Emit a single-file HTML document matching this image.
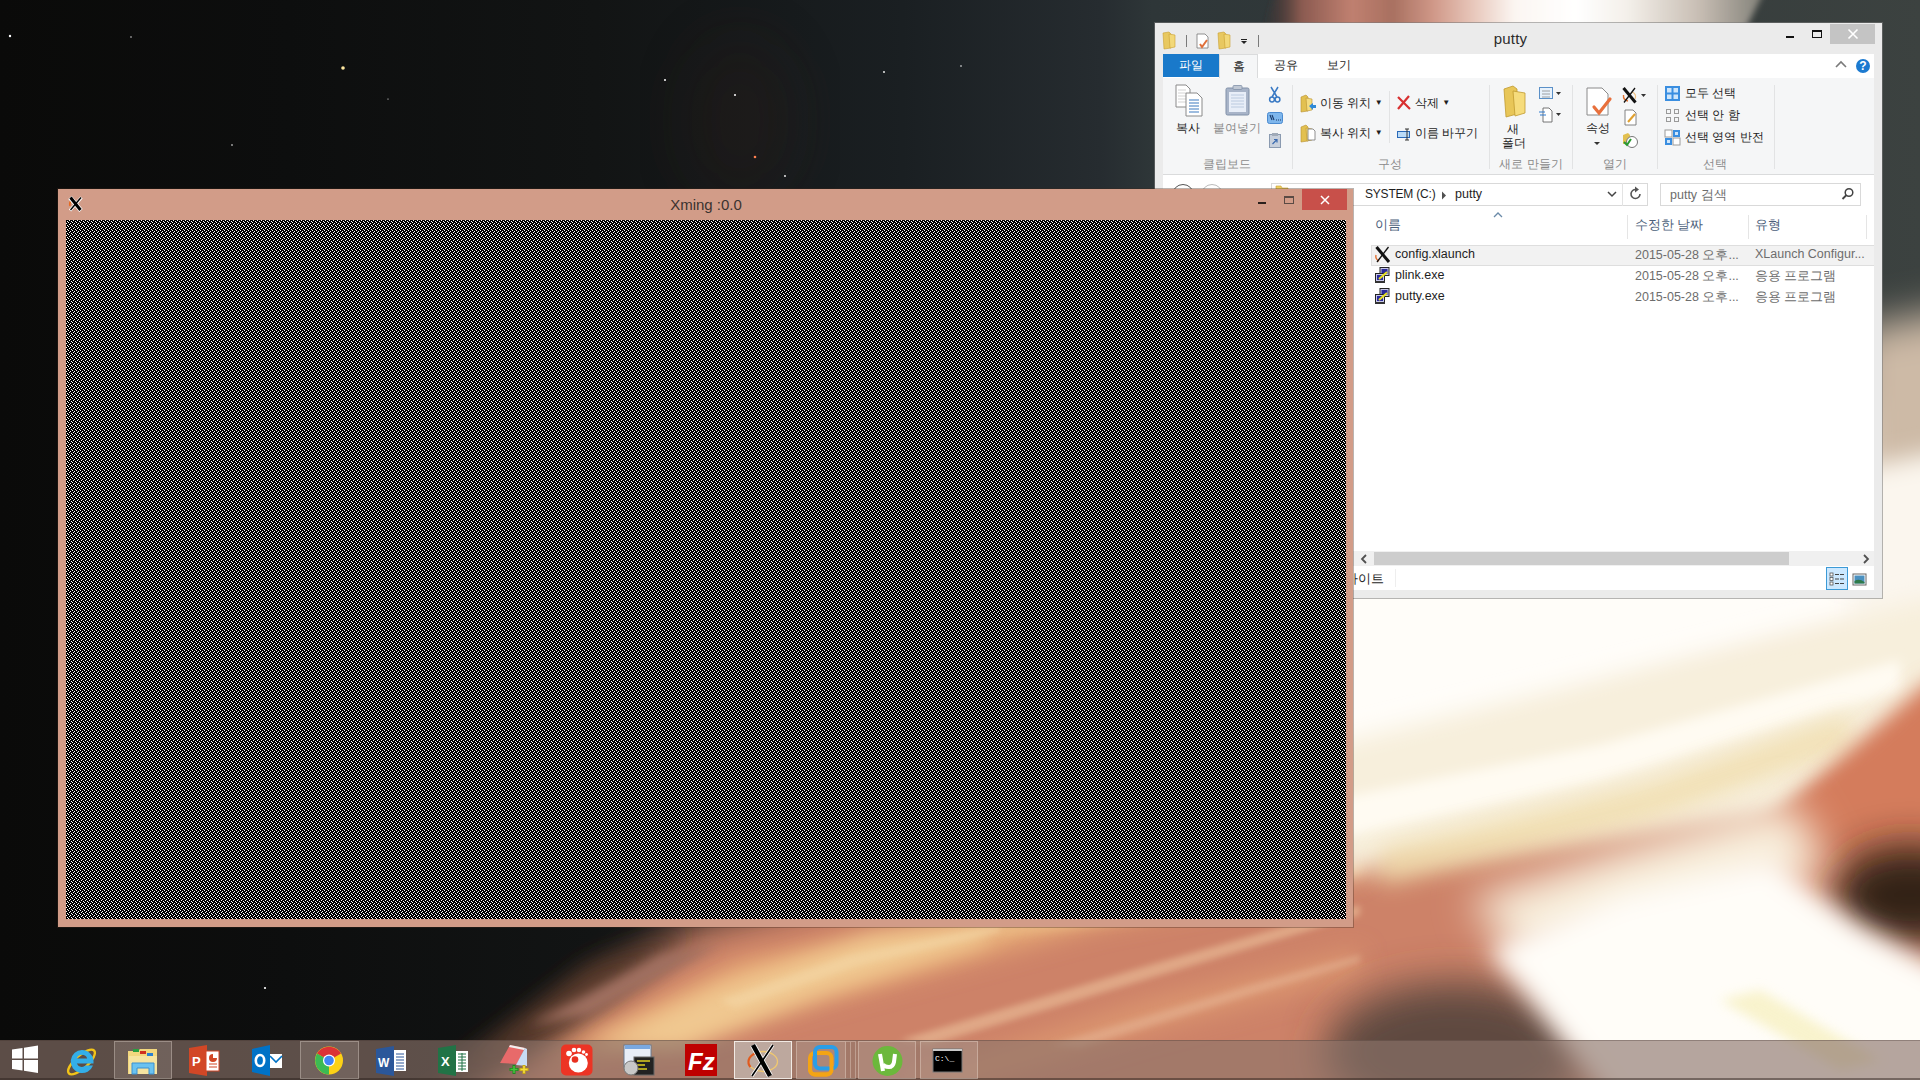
<!DOCTYPE html>
<html><head><meta charset="utf-8">
<style>
*{margin:0;padding:0;box-sizing:border-box}
html,body{width:1920px;height:1080px;overflow:hidden;background:#0b0b0c;font-family:"Liberation Sans",sans-serif}
.abs{position:absolute}
#wall{position:absolute;left:0;top:0;width:1920px;height:1080px}
</style></head><body>
<svg id="wall" width="1920" height="1080" viewBox="0 0 1920 1080">
<defs>
 <filter id="b60" x="-50%" y="-50%" width="200%" height="200%"><feGaussianBlur stdDeviation="60"/></filter>
 <filter id="b30" x="-50%" y="-50%" width="200%" height="200%"><feGaussianBlur stdDeviation="30"/></filter>
 <filter id="b20" x="-50%" y="-50%" width="200%" height="200%"><feGaussianBlur stdDeviation="20"/></filter>
 <filter id="b12" x="-50%" y="-50%" width="200%" height="200%"><feGaussianBlur stdDeviation="12"/></filter>
 <filter id="b10" x="-50%" y="-50%" width="200%" height="200%"><feGaussianBlur stdDeviation="10"/></filter>
 <filter id="b6" x="-50%" y="-50%" width="200%" height="200%"><feGaussianBlur stdDeviation="6"/></filter>
 <filter id="b3" x="-50%" y="-50%" width="200%" height="200%"><feGaussianBlur stdDeviation="3"/></filter>
 <linearGradient id="sky" x1="0" y1="0" x2="1" y2="0">
  <stop offset="0" stop-color="#0a0a09"/><stop offset="0.15" stop-color="#0d0e0e"/><stop offset="0.31" stop-color="#121414"/><stop offset="0.47" stop-color="#1a1f22"/><stop offset="0.573" stop-color="#262c30"/><stop offset="0.6" stop-color="#2e3638"/><stop offset="0.85" stop-color="#353c3c"/><stop offset="1" stop-color="#3c4240"/>
 </linearGradient>
 <linearGradient id="beam" x1="0" y1="0" x2="1" y2="0">
  <stop offset="0" stop-color="#3a2a28" stop-opacity="0"/><stop offset="0.08" stop-color="#8a5a50"/><stop offset="0.18" stop-color="#c08070"/><stop offset="0.26" stop-color="#a87060"/><stop offset="0.34" stop-color="#d09888"/><stop offset="0.42" stop-color="#e8c8bc"/><stop offset="0.5" stop-color="#fcf6f2"/><stop offset="0.62" stop-color="#ffffff"/><stop offset="0.72" stop-color="#f4f0ea"/><stop offset="0.86" stop-color="#c8beb4"/><stop offset="1" stop-color="#7a7a72"/>
 </linearGradient>
</defs>
<rect width="1920" height="1080" fill="url(#sky)"/>
<ellipse cx="740" cy="120" rx="50" ry="80" fill="#2e1c16" opacity="0.3" filter="url(#b30)"/>
<!-- top beam -->
<polygon points="1280,-20 1770,-20 1740,40 1260,40" fill="url(#beam)" filter="url(#b3)"/>
<!-- orange region (whole lower-right) -->
<polygon points="410,1140 690,925 1000,850 1353,760 2000,500 2000,1140" fill="#cd8268" filter="url(#b20)"/>
<polygon points="440,1080 590,965 690,930 560,1030" fill="#5a3a2c" filter="url(#b12)"/>
<polygon points="530,1025 660,955 720,945 590,1015" fill="#a07060" filter="url(#b6)"/>
<!-- light streaks under xming -->
<polygon points="540,1060 740,960 1100,895 1360,850 1360,875 1100,925 680,1040" fill="#e6a874" filter="url(#b12)"/>
<polygon points="590,1045 720,985 870,935 1010,920 980,945 820,995 680,1050" fill="#f0c890" filter="url(#b10)"/>
<polygon points="1000,925 1150,905 1360,860 1360,872 1150,918 1000,935" fill="#f0c890" opacity="0.7" filter="url(#b6)"/>
<polygon points="900,1080 1150,1000 1360,950 1360,975 1150,1030 950,1090" fill="#dc9670" filter="url(#b12)"/>
<g filter="url(#b3)" opacity="0.55">
 <polygon points="900,1040 1150,965 1360,905 1360,915 1150,978 930,1045" fill="#f0c8a0"/>
 <polygon points="1050,1045 1250,985 1360,955 1360,962 1250,995 1080,1048" fill="#e8b898"/>
 <polygon points="720,1000 850,955 1000,925 1000,932 860,965 735,1008" fill="#f4d8a8"/>
</g>
<!-- glow (white) top of right region -->
<polygon points="1280,540 2000,380 2000,620 1760,680 1353,800 1280,820" fill="#fffdf9" filter="url(#b20)"/>
<!-- right strip beige -->
<polygon points="1850,330 2000,300 2000,560 1850,560" fill="#cdbaa6" filter="url(#b20)"/>
<polygon points="1850,470 2000,440 2000,700 1850,700" fill="#fbf6ee" filter="url(#b12)"/>
<!-- cream textured band -->
<polygon points="1330,745 1920,600 2000,590 2000,690 1780,815 1500,850 1330,875" fill="#f7efdc" filter="url(#b12)"/>
<polygon points="1330,800 1600,745 1900,660 1900,690 1600,780 1330,840" fill="#fffbf2" filter="url(#b6)"/>
<polygon points="1380,850 1650,785 1850,715 1850,745 1650,820 1380,885" fill="#f0dca8" opacity="0.8" filter="url(#b12)"/>
<!-- salmon right -->
<polygon points="1740,845 1930,680 2000,670 2000,900 1740,900" fill="#d47c5c" filter="url(#b10)"/>
<!-- dark patch right -->
<ellipse cx="1910" cy="895" rx="78" ry="50" fill="#302218" filter="url(#b20)"/>
<!-- dark patch bottom -->
<ellipse cx="1455" cy="1052" rx="130" ry="70" fill="#5e4a40" filter="url(#b20)"/>
<polygon points="1470,900 1620,850 1790,800 1830,870 1700,920 1520,960" fill="#f8eedc" filter="url(#b20)"/>
<!-- white burst -->
<polygon points="1490,950 1620,895 1770,860 1860,925 2000,1000 2000,1140 1640,1140" fill="#fffdf8" filter="url(#b12)"/>
<polygon points="1720,1000 1760,990 1880,1060 1840,1070" fill="#f4ecb0" opacity="0.6" filter="url(#b6)"/>
<!-- stars -->
<g fill="#fff">
 <circle cx="10" cy="36" r="1.2"/><circle cx="343" cy="68" r="1.8" fill="#ffe8a0"/><circle cx="665" cy="80" r="1"/><circle cx="735" cy="95" r="1"/><circle cx="755" cy="157" r="1.3" fill="#ff8050"/><circle cx="785" cy="176" r="0.9"/><circle cx="884" cy="72" r="0.9"/><circle cx="265" cy="988" r="1.1"/><circle cx="232" cy="145" r="0.8"/><circle cx="131" cy="37" r="0.7"/><circle cx="961" cy="66" r="0.8"/><circle cx="1183" cy="165" r="0.6"/><circle cx="388" cy="99" r="0.6"/><circle cx="170" cy="855" r="0.6"/>
</g>
</svg>

<!-- Explorer window -->
<div class="abs" id="exp" style="left:1155px;top:23px;width:727px;height:575px;background:#ebebeb;box-shadow:0 0 0 1px rgba(120,120,120,0.55)">
</div>
<div class="abs" style="left:1155px;top:23px;width:727px;height:575px;font-size:12px;color:#1e1e1e">
 <!-- title -->
 <div class="abs" style="left:-8px;top:7px;width:727px;text-align:center;font-size:15px;color:#2b2b2b;letter-spacing:0.2px">putty</div>
 <!-- quick access -->
 <svg class="abs" style="left:6px;top:6px" width="100" height="22">
  <path d="M2 4 L8 3 L10 5 L10 19 L3 20 Z" fill="#e8c860" stroke="#c9a030" stroke-width="0.6"/>
  <path d="M8 5 L14 6 L14 18 L9 19 Z" fill="#f2d878" stroke="#c9a030" stroke-width="0.6"/>
  <rect x="25" y="6" width="1" height="12" fill="#7a7a7a"/>
  <path d="M36 5 H44 L47 8 V19 H36 Z" fill="#fff" stroke="#777" stroke-width="0.8"/>
  <path d="M39 15 L41 18 L46 11" fill="none" stroke="#e0703a" stroke-width="2"/>
  <path d="M57 4 L63 3 L65 5 L65 19 L58 20 Z" fill="#e8c860" stroke="#c9a030" stroke-width="0.6"/>
  <path d="M63 5 L69 6 L69 18 L64 19 Z" fill="#f2d878" stroke="#c9a030" stroke-width="0.6"/>
  <rect x="80" y="10" width="6" height="1" fill="#222"/>
  <path d="M80 12 H86 L83 15 Z" fill="#222"/>
  <rect x="97" y="6" width="1" height="12" fill="#7a7a7a"/>
 </svg>
 <!-- window buttons -->
 <div class="abs" style="left:631px;top:13px;width:8px;height:2px;background:#111"></div>
 <div class="abs" style="left:657px;top:7px;width:10px;height:8px;border:1px solid #111;border-top-width:2px"></div>
 <div class="abs" style="left:675px;top:1px;width:45px;height:20px;background:#c4c4c4"></div>
 <svg class="abs" style="left:692px;top:5px" width="12" height="12"><path d="M1.5 1.5 L10.5 10.5 M10.5 1.5 L1.5 10.5" stroke="#fff" stroke-width="1.6"/></svg>
 <!-- tab row -->
 <div class="abs" style="left:8px;top:31px;width:711px;height:25px;background:#fff;border-bottom:1px solid #dadbdc"></div>
 <div class="abs" style="left:8px;top:31px;width:56px;height:23px;background:#1979ca;color:#fff;text-align:center;line-height:23px;font-size:12px">파일</div>
 <div class="abs" style="left:64px;top:31px;width:39px;height:25px;background:#f5f6f7;border:1px solid #dadbdc;border-bottom:none;text-align:center;line-height:23px">홈</div>
 <div class="abs" style="left:119px;top:31px;line-height:23px">공유</div>
 <div class="abs" style="left:172px;top:31px;line-height:23px">보기</div>
 <svg class="abs" style="left:680px;top:37px" width="12" height="10"><path d="M1 7 L6 2 L11 7" fill="none" stroke="#7a7a7a" stroke-width="1.6"/></svg>
 <div class="abs" style="left:701px;top:36px;width:14px;height:14px;border-radius:50%;background:#1c7ad0;color:#fff;font-size:12px;font-weight:bold;text-align:center;line-height:14px">?</div>
 <!-- ribbon body -->
 <div class="abs" style="left:8px;top:55px;width:711px;height:97px;background:#f5f6f7;border-bottom:1px solid #dadbdc"></div>
 <div class="abs" style="left:137px;top:62px;width:1px;height:84px;background:#e2e3e4"></div>
 <div class="abs" style="left:334px;top:62px;width:1px;height:84px;background:#e2e3e4"></div>
 <div class="abs" style="left:417px;top:62px;width:1px;height:84px;background:#e2e3e4"></div>
 <div class="abs" style="left:502px;top:62px;width:1px;height:84px;background:#e2e3e4"></div>
 <div class="abs" style="left:619px;top:62px;width:1px;height:84px;background:#e2e3e4"></div>
 <!-- group labels -->
 <div class="abs" style="left:40px;top:133px;width:64px;text-align:center;color:#8a8a8a">클립보드</div>
 <div class="abs" style="left:205px;top:133px;width:60px;text-align:center;color:#8a8a8a">구성</div>
 <div class="abs" style="left:335px;top:133px;width:82px;text-align:center;color:#8a8a8a">새로 만들기</div>
 <div class="abs" style="left:418px;top:133px;width:84px;text-align:center;color:#8a8a8a">열기</div>
 <div class="abs" style="left:520px;top:133px;width:80px;text-align:center;color:#8a8a8a">선택</div>
 <!-- ribbon items text -->
 <div class="abs" style="left:21px;top:97px">복사</div>
 <div class="abs" style="left:58px;top:97px;color:#8a8a8a">붙여넣기</div>
 <div class="abs" style="left:165px;top:72px">이동 위치 <span style="font-size:8px;vertical-align:2px">▼</span></div>
 <div class="abs" style="left:165px;top:102px">복사 위치 <span style="font-size:8px;vertical-align:2px">▼</span></div>
 <div class="abs" style="left:260px;top:72px">삭제 <span style="font-size:8px;vertical-align:2px">▼</span></div>
 <div class="abs" style="left:260px;top:102px">이름 바꾸기</div>
 <div class="abs" style="left:352px;top:98px">새</div>
 <div class="abs" style="left:347px;top:112px">폴더</div>
 <div class="abs" style="left:431px;top:97px">속성</div>
 <div class="abs" style="left:530px;top:62px">모두 선택</div>
 <div class="abs" style="left:530px;top:84px">선택 안 함</div>
 <div class="abs" style="left:530px;top:106px">선택 영역 반전</div>
 <!-- ribbon icons -->
 <svg class="abs" style="left:0;top:0;overflow:visible" width="727" height="320">
  <!-- copy -->
  <g transform="translate(20,62)">
   <path d="M1 0 H11 L15 4 V22 H1 Z" fill="#fff" stroke="#8a8a8a" stroke-width="1"/>
   <path d="M3 5H11M3 8H11M3 11H11M3 14H11M3 17H11" stroke="#c8c8c8" stroke-width="0.8"/>
   <path d="M11 8 H22 L27 13 V31 H11 Z" fill="#fff" stroke="#8a8a8a" stroke-width="1"/>
   <path d="M14 15H24M14 18H24M14 21H24M14 24H24M14 27H24" stroke="#3c7ac0" stroke-width="1.1"/>
  </g>
  <!-- paste -->
  <g transform="translate(70,62)">
   <rect x="1" y="3" width="23" height="27" rx="1.5" fill="#a8b4c8" stroke="#8090a8" stroke-width="1"/>
   <rect x="4" y="7" width="17" height="20" fill="#e8eef8"/>
   <path d="M6 10H19M6 13H19M6 16H19M6 19H19M6 22H19" stroke="#b0c0d8" stroke-width="0.8"/>
   <rect x="8" y="0.5" width="9" height="4" rx="1" fill="#c0c8d4" stroke="#8090a8" stroke-width="0.8"/>
  </g>
  <!-- scissors -->
  <g transform="translate(114,64)" stroke="#3a7ac4" fill="none" stroke-width="1.5">
   <path d="M2 0 L8 10 M9 0 L3 10"/><circle cx="3" cy="12.5" r="2.4"/><circle cx="8.5" cy="12.5" r="2.4"/>
  </g>
  <!-- copy path -->
  <g transform="translate(112,89)">
   <rect x="0.5" y="0.5" width="15" height="11" rx="2" fill="#7eb6ec" stroke="#4a8ad0"/>
   <path d="M3 3 L5 8 M5 3 L7 8" stroke="#1a3a6a" stroke-width="1.1"/><path d="M9 8H10M11 8H12M13 8H14" stroke="#1a3a6a"/>
  </g>
  <!-- paste shortcut -->
  <g transform="translate(114,110)">
   <rect x="0.5" y="1.5" width="11" height="13" fill="#c8d0dc" stroke="#8a9ab0"/>
   <rect x="3" y="0" width="6" height="3" fill="#a0aab8"/>
   <path d="M3.5 11 L8 6.5 M5 6.5H8V9.5" stroke="#3a6ab0" fill="none" stroke-width="1.2"/>
  </g>
  <!-- move to -->
  <g transform="translate(145,72)">
   <path d="M1 2 L6 0 L8 2 V16 L1 17 Z" fill="#e2c050" stroke="#b89030" stroke-width="0.6"/>
   <path d="M6 3 L12 4 V15 L7 16 Z" fill="#f4dc80" stroke="#b89030" stroke-width="0.6"/>
   <path d="M9 11 L13 8 V10 H16 V13 H13 V15 Z" fill="#2f8ad8"/>
  </g>
  <!-- copy to -->
  <g transform="translate(145,102)">
   <path d="M1 2 L6 0 L8 2 V16 L1 17 Z" fill="#e2c050" stroke="#b89030" stroke-width="0.6"/>
   <path d="M6 3 L12 4 V15 L7 16 Z" fill="#f4dc80" stroke="#b89030" stroke-width="0.6"/>
   <path d="M8 4 H13 L15 6 V15 H8 Z" fill="#fff" stroke="#777" stroke-width="0.8"/>
  </g>
  <!-- delete X -->
  <path d="M243 74 L255 86 M254 73 L243 86" stroke="#d83030" stroke-width="2.2" fill="none"/>
  <!-- rename -->
  <g transform="translate(242,105)">
   <rect x="0.5" y="3.5" width="12" height="6" fill="#bcdcf8" stroke="#2a6ab8"/>
   <path d="M10 1 V12 M8 1 H12 M8 12 H12" stroke="#333" stroke-width="1"/>
  </g>
  <rect x="234" y="68" width="1" height="52" fill="#e2e3e4"/>
  <!-- new folder -->
  <g transform="translate(348,63)">
   <path d="M1 3 L10 0 L14 3 V28 L3 31 Z" fill="#e8c658" stroke="#c09a30" stroke-width="0.8"/>
   <path d="M10 5 L22 7 V27 L12 30 Z" fill="#f6dc7c" stroke="#c09a30" stroke-width="0.8"/>
  </g>
  <!-- new item icons -->
  <g transform="translate(384,63)">
   <rect x="0.5" y="1.5" width="13" height="11" fill="#e8f2fc" stroke="#5a90c8"/>
   <path d="M3 5H11M3 8H11M3 11H11" stroke="#8a8a8a" stroke-width="0.8"/>
   <path d="M17 6 H22 L19.5 9 Z" fill="#333"/>
  </g>
  <g transform="translate(384,84)">
   <path d="M4 1 H10 L13 4 V15 H4 Z" fill="#fff" stroke="#666" stroke-width="0.9"/>
   <path d="M0 5 H6 M1 8 H7" stroke="#2f7ad0" stroke-width="1.2"/>
   <path d="M17 6 H22 L19.5 9 Z" fill="#333"/>
  </g>
  <!-- properties -->
  <g transform="translate(431,65)">
   <path d="M1 0 H16 L22 6 V27 H1 Z" fill="#fff" stroke="#8a8a8a" stroke-width="1"/>
   <path d="M8 19 L13 25 L24 11" fill="none" stroke="#e8703c" stroke-width="3.2" stroke-linecap="round"/>
  </g>
  <path d="M439 119 H445 L442 122 Z" fill="#333"/>
  <!-- open X -->
  <g transform="translate(467,64)">
   <path d="M1.5 8 Q1 13 6 14" fill="none" stroke="#e07030" stroke-width="1.4"/>
   <path d="M10 5 Q15 7 13 12" fill="none" stroke="#f0c080" stroke-width="1.1"/>
   <path d="M1.5 1 L13.5 15.5" stroke="#111" stroke-width="3"/>
   <path d="M13 1 L2 15.5" stroke="#111" stroke-width="1.3"/>
   <path d="M19 7 H24 L21.5 10 Z" fill="#333"/>
  </g>
  <!-- edit -->
  <g transform="translate(469,87)">
   <path d="M1 0 H9 L12 3 V15 H1 Z" fill="#fff" stroke="#777" stroke-width="0.9"/>
   <path d="M4 12 L11 4" stroke="#e0a030" stroke-width="2"/>
  </g>
  <!-- history -->
  <g transform="translate(467,110)">
   <path d="M1 2 L6 0 L8 2 V10 L1 11 Z" fill="#e2c050"/>
   <circle cx="10" cy="9" r="5.5" fill="#fff" stroke="#777"/>
   <path d="M2 9 L5 12 L9 6" stroke="#2a9a30" stroke-width="2" fill="none"/>
  </g>
  <!-- select all -->
  <g transform="translate(510,63)">
   <rect x="0" y="0" width="15" height="15" fill="#3a8ee0"/>
   <rect x="2" y="2" width="4.5" height="4.5" fill="#cfe6fb"/><rect x="8.5" y="2" width="4.5" height="4.5" fill="#cfe6fb"/>
   <rect x="2" y="8.5" width="4.5" height="4.5" fill="#cfe6fb"/><rect x="8.5" y="8.5" width="4.5" height="4.5" fill="#cfe6fb"/>
  </g>
  <g transform="translate(510,85)" fill="none" stroke="#9a9a9a" stroke-width="1">
   <rect x="1.5" y="1.5" width="4" height="4"/><rect x="9.5" y="1.5" width="4" height="4"/>
   <rect x="1.5" y="9.5" width="4" height="4"/><rect x="9.5" y="9.5" width="4" height="4"/>
  </g>
  <g transform="translate(510,107)">
   <rect x="0" y="0" width="7" height="7" fill="#fff" stroke="#9a9a9a"/><rect x="8" y="0" width="7" height="7" fill="#3a8ee0"/>
   <rect x="0" y="8" width="7" height="7" fill="#3a8ee0"/><rect x="8" y="8" width="7" height="7" fill="#fff" stroke="#9a9a9a"/>
   <rect x="2" y="10" width="3" height="3" fill="#cfe6fb"/><rect x="10" y="2" width="3" height="3" fill="#cfe6fb"/>
  </g>
 </svg>
 <!-- nav bar -->
 <div class="abs" style="left:8px;top:152px;width:711px;height:38px;background:#fff"></div>
 <div class="abs" style="left:116px;top:160px;width:377px;height:23px;border:1px solid #d9d9d9;background:#fff"></div>
 <div class="abs" style="left:17px;top:161px;width:22px;height:22px;border-radius:50%;border:1px solid #555"></div>
 <div class="abs" style="left:46px;top:161px;width:22px;height:22px;border-radius:50%;border:1px solid #bbb"></div>
 <svg class="abs" style="left:120px;top:162px" width="14" height="12"><path d="M1 1 H6 L7 3 H13 V11 H1 Z" fill="#f0d060" stroke="#c8a030" stroke-width="0.6"/></svg>
 <div class="abs" style="left:467px;top:160px;width:1px;height:23px;background:#e3e3e3"></div>
 <div class="abs" style="left:210px;top:164px;font-size:12px;letter-spacing:-0.2px;color:#1e1e1e">SYSTEM (C:)</div>
 <svg class="abs" style="left:286px;top:168px" width="6" height="9"><path d="M1 0.5 L5 4.5 L1 8.5 Z" fill="#505050"/></svg>
 <div class="abs" style="left:300px;top:164px;font-size:12.5px;color:#1e1e1e">putty</div>
 <svg class="abs" style="left:452px;top:166px" width="10" height="10"><path d="M1 3 L5 7 L9 3" fill="none" stroke="#444" stroke-width="1.5"/></svg>
 <svg class="abs" style="left:474px;top:163px" width="14" height="16"><path d="M11 8 A4.5 4.5 0 1 1 7 3.5" fill="none" stroke="#555" stroke-width="1.6"/><path d="M6 0.5 L10 3.5 L6 6.5 Z" fill="#555"/></svg>
 <div class="abs" style="left:505px;top:160px;width:201px;height:23px;border:1px solid #d9d9d9;background:#fff"></div>
 <div class="abs" style="left:515px;top:164px;font-size:12.5px;color:#6d6d6d">putty 검색</div>
 <svg class="abs" style="left:686px;top:164px" width="14" height="14"><circle cx="8" cy="5.5" r="3.8" fill="none" stroke="#444" stroke-width="1.5"/><path d="M5.5 8 L1.5 12" stroke="#444" stroke-width="1.8"/></svg>
 <!-- file list area -->
 <div class="abs" style="left:8px;top:190px;width:711px;height:338px;background:#fff"></div>
 <div class="abs" style="left:220px;top:194px;font-size:12.5px;color:#4c607a">이름</div>
 <svg class="abs" style="left:338px;top:189px" width="10" height="6"><path d="M1 5 L5 1 L9 5" fill="none" stroke="#6a8aa8" stroke-width="1.3"/></svg>
 <div class="abs" style="left:472px;top:192px;width:1px;height:24px;background:#e5e5e5"></div>
 <div class="abs" style="left:480px;top:194px;font-size:12.5px;color:#4c607a">수정한 날짜</div>
 <div class="abs" style="left:593px;top:192px;width:1px;height:24px;background:#e5e5e5"></div>
 <div class="abs" style="left:600px;top:194px;font-size:12.5px;color:#4c607a">유형</div>
 <div class="abs" style="left:711px;top:192px;width:1px;height:24px;background:#e5e5e5"></div>
 <div class="abs" style="left:216px;top:222px;width:503px;height:21px;background:#f2f2f2;border:1px solid #dedede;border-right:none"></div>
 <div class="abs" style="left:240px;top:224px;font-size:12.5px;color:#1e1e1e">config.xlaunch</div>
 <div class="abs" style="left:240px;top:245px;font-size:12.5px;color:#1e1e1e">plink.exe</div>
 <div class="abs" style="left:240px;top:266px;font-size:12.5px;color:#1e1e1e">putty.exe</div>
 <div class="abs" style="left:480px;top:224px;font-size:12.5px;color:#6d6d6d">2015-05-28 오후...</div>
 <div class="abs" style="left:480px;top:245px;font-size:12.5px;color:#6d6d6d">2015-05-28 오후...</div>
 <div class="abs" style="left:480px;top:266px;font-size:12.5px;color:#6d6d6d">2015-05-28 오후...</div>
 <div class="abs" style="left:600px;top:224px;font-size:12.5px;color:#6d6d6d">XLaunch Configur...</div>
 <div class="abs" style="left:600px;top:245px;font-size:12.5px;color:#6d6d6d">응용 프로그램</div>
 <div class="abs" style="left:600px;top:266px;font-size:12.5px;color:#6d6d6d">응용 프로그램</div>
 <svg class="abs" style="left:0;top:0" width="727" height="320">
  <!-- file icons -->
  <g transform="translate(220,223)">
   <path d="M1 9 Q0 13 4 15" stroke="#e07030" stroke-width="1.4" fill="none"/>
   <path d="M1.5 1 L14 16" stroke="#111" stroke-width="3"/><path d="M13.5 1 L2 16" stroke="#111" stroke-width="1.3"/>
  </g>
  <g transform="translate(220,244)">
   <rect x="5" y="0.5" width="9" height="8" fill="#c8c8e8" stroke="#222"/><rect x="6.5" y="2" width="6" height="5" fill="#2a2a9a"/>
   <rect x="0.5" y="6.5" width="9" height="8" fill="#c8c8e8" stroke="#222"/><rect x="2" y="8" width="6" height="5" fill="#2a2a9a"/>
   <path d="M4 12 L12 5" stroke="#e8e020" stroke-width="2"/><rect x="0" y="14" width="10" height="2" fill="#333"/>
  </g>
  <g transform="translate(220,265)">
   <rect x="5" y="0.5" width="9" height="8" fill="#c8c8e8" stroke="#222"/><rect x="6.5" y="2" width="6" height="5" fill="#2a2a9a"/>
   <rect x="0.5" y="6.5" width="9" height="8" fill="#c8c8e8" stroke="#222"/><rect x="2" y="8" width="6" height="5" fill="#2a2a9a"/>
   <path d="M4 12 L12 5" stroke="#e8e020" stroke-width="2"/><rect x="0" y="14" width="10" height="2" fill="#333"/>
  </g>
 </svg>
 <!-- scrollbar -->
 <div class="abs" style="left:198px;top:528px;width:521px;height:15px;background:#f0f0f0"></div>
 <div class="abs" style="left:219px;top:529px;width:415px;height:13px;background:#cdcdcd"></div>
 <svg class="abs" style="left:205px;top:531px" width="8" height="10"><path d="M6 1 L2 5 L6 9" fill="none" stroke="#505050" stroke-width="1.8"/></svg>
 <svg class="abs" style="left:707px;top:531px" width="8" height="10"><path d="M2 1 L6 5 L2 9" fill="none" stroke="#505050" stroke-width="1.8"/></svg>
 <!-- status bar -->
 <div class="abs" style="left:8px;top:543px;width:711px;height:24px;background:#fff"></div>
 <div class="abs" style="left:190px;top:548px;font-size:12.5px;color:#1e1e1e">바이트</div>
 <div class="abs" style="left:240px;top:546px;width:1px;height:18px;background:#eeeeee"></div>
 <div class="abs" style="left:671px;top:544px;width:22px;height:23px;background:#cce8ff;border:1px solid #3c9ad6"></div>
 <svg class="abs" style="left:674px;top:549px" width="16" height="14"><rect x="1" y="1" width="3" height="3" fill="#fff" stroke="#555" stroke-width="0.8"/><rect x="1" y="5.5" width="3" height="3" fill="#fff" stroke="#555" stroke-width="0.8"/><rect x="1" y="10" width="3" height="3" fill="#fff" stroke="#555" stroke-width="0.8"/><path d="M6 2.5H10M11 2.5H15M6 7H10M11 7H15M6 11.5H10M11 11.5H15" stroke="#444" stroke-width="1.2"/></svg>
 <svg class="abs" style="left:697px;top:550px" width="16" height="14"><rect x="1" y="1" width="13" height="11" fill="#fff" stroke="#666" stroke-width="1"/><rect x="2.5" y="2.5" width="10" height="8" fill="#4a90c0"/><path d="M2.5 8 Q7 5 12.5 9 V10.5 H2.5 Z" fill="#2e7a4a"/></svg>
</div>
<!-- Xming window -->
<div class="abs" style="left:58px;top:189px;width:1295px;height:738px;background:#d29c88;box-shadow:0 0 0 1px rgba(60,40,30,0.35)">
 <svg class="abs" style="left:8px;top:31px" width="1280" height="699">
  <defs><pattern id="weave" width="4" height="4" patternUnits="userSpaceOnUse">
   <rect width="4" height="4" fill="#000"/>
   <rect x="3" y="0" width="1" height="1" fill="#fff"/><rect x="1" y="1" width="1" height="1" fill="#fff"/>
   <rect x="2" y="2" width="1" height="1" fill="#fff"/><rect x="0" y="3" width="1" height="1" fill="#fff"/>
  </pattern></defs>
  <rect width="1280" height="699" fill="url(#weave)" shape-rendering="crispEdges"/>
 </svg>
 <svg class="abs" style="left:9px;top:6px" width="18" height="18">
  <path d="M3 11 Q2 7 5 5" fill="none" stroke="#e86a20" stroke-width="1.6"/>
  <path d="M3 2.5 L14 15.5" stroke="#fff" stroke-width="4.5"/><path d="M14.5 2.5 L3 15.5" stroke="#fff" stroke-width="3"/>
  <path d="M3.5 2.5 L13.5 15" stroke="#000" stroke-width="3"/><path d="M14 2.5 L3.5 15" stroke="#000" stroke-width="1.4"/>
 </svg>
 <div class="abs" style="left:0;top:7px;width:1295px;text-align:center;font-size:15px;color:#3b3330;padding-left:1px">Xming :0.0</div>
 <div class="abs" style="left:1200px;top:13px;width:8px;height:2px;background:#2a201c"></div>
 <div class="abs" style="left:1226px;top:7px;width:10px;height:8px;border:1px solid #5a4a44;border-top-width:2px"></div>
 <div class="abs" style="left:1244px;top:0;width:45px;height:21px;background:#c8504a"></div>
 <svg class="abs" style="left:1262px;top:6px" width="10" height="10"><path d="M1 1 L9 9 M9 1 L1 9" stroke="#fff" stroke-width="1.5"/></svg>
</div>
<!-- Taskbar -->
<div class="abs" style="left:0;top:1040px;width:1920px;height:40px;background:rgba(140,116,106,0.64);border-top:1px solid rgba(60,45,40,0.3);border-bottom:2px solid rgba(40,30,25,0.45)"></div>
<!-- buttons -->
<div class="abs" style="left:114px;top:1041px;width:58px;height:38px;background:rgba(255,240,230,0.12);border:1px solid rgba(255,245,235,0.3)"></div>
<div class="abs" style="left:300px;top:1041px;width:59px;height:38px;background:rgba(255,240,230,0.12);border:1px solid rgba(255,245,235,0.3)"></div>
<div class="abs" style="left:734px;top:1041px;width:58px;height:38px;background:rgba(215,215,212,0.5);border:1px solid rgba(255,250,245,0.8)"></div>
<div class="abs" style="left:796px;top:1041px;width:50px;height:38px;background:rgba(255,240,230,0.12);border:1px solid rgba(255,245,235,0.3)"></div>
<div class="abs" style="left:846px;top:1041px;width:5px;height:38px;border:1px solid rgba(255,245,235,0.3);border-left:none"></div>
<div class="abs" style="left:851px;top:1041px;width:5px;height:38px;border:1px solid rgba(255,245,235,0.3);border-left:none"></div>
<div class="abs" style="left:858px;top:1041px;width:58px;height:38px;background:rgba(255,240,230,0.12);border:1px solid rgba(255,245,235,0.3)"></div>
<div class="abs" style="left:920px;top:1041px;width:58px;height:38px;background:rgba(255,240,230,0.12);border:1px solid rgba(255,245,235,0.3)"></div>
<svg class="abs" style="left:0;top:1040px" width="1000" height="40">
 <!-- windows logo -->
 <path d="M12 9.5 L22.5 8 V18.5 H12 Z M24 7.8 L38 5.5 V18.5 H24 Z M12 20 H22.5 V30.5 L12 29 Z M24 20 H38 V33 L24 30.7 Z" fill="#fff"/>
 <!-- IE -->
 <g transform="translate(66,4)">
  <ellipse cx="15.5" cy="18" rx="17" ry="6.5" transform="rotate(-42 15.5 18)" fill="none" stroke="#f2c418" stroke-width="2.4"/>
  <path d="M16 6 A11.5 11.5 0 1 0 27 21.5 H19.5 A5.5 5.5 0 0 1 10.8 19.5 H27.5 V17 A11.5 11.5 0 0 0 16 6 Z M10.8 14.5 A5.5 5.5 0 0 1 21.2 14.5 Z" fill="#33aee8" fill-rule="evenodd"/>
 </g>
 <!-- explorer -->
 <g transform="translate(127,6)">
  <path d="M1 5 H11 L13 3 H30 V28 H1 Z" fill="#f2d77e"/>
  <rect x="6" y="3" width="6" height="3" fill="#2aa040"/><rect x="13" y="5" width="6" height="3" fill="#d03020"/><rect x="20" y="7" width="6" height="3" fill="#2a80d0"/>
  <rect x="2" y="10" width="28" height="18" fill="#f6e4a0"/>
  <path d="M5 28 V17 H27 V28 H22 V22 H10 V28 Z" fill="#6ac2f0" stroke="#3a90d0" stroke-width="1"/>
 </g>
 <!-- ppt -->
 <g transform="translate(189,5)">
  <path d="M0 3 L18 0 V31 L0 28 Z" fill="#d24726"/>
  <rect x="17" y="6" width="13" height="20" fill="#fff" stroke="#d24726" stroke-width="1"/>
  <path d="M24 9 A4 4 0 1 0 28 13 H24 Z" fill="#d24726"/><path d="M20 19H28M20 22H28" stroke="#d24726" stroke-width="1.2"/>
  <text x="3" y="21" font-family="Liberation Sans" font-weight="bold" font-size="13" fill="#fff">P</text>
 </g>
 <!-- outlook -->
 <g transform="translate(252,5)">
  <path d="M0 4 L18 0 V31 L0 27 Z" fill="#0072c6"/>
  <rect x="18" y="9" width="12" height="14" fill="#fff"/><path d="M18 11 L24 17 L30 11" fill="none" stroke="#0072c6" stroke-width="1.6"/>
  <ellipse cx="8" cy="15.5" rx="4.2" ry="5.5" fill="none" stroke="#fff" stroke-width="2.6"/>
 </g>
 <!-- chrome -->
 <g transform="translate(315,6)">
  <circle cx="14" cy="14.5" r="14" fill="#fcd116"/>
  <path d="M14 14.5 L2 7.5 A14 14 0 0 1 26 7.5 Z" fill="#db3236"/>
  <path d="M14 14.5 L2 7.5 A14 14 0 0 0 14 28.5 Z" fill="#3cba54"/>
  <circle cx="14" cy="14.5" r="6" fill="#fff"/><circle cx="14" cy="14.5" r="4.8" fill="#4285f4"/>
 </g>
 <!-- word -->
 <g transform="translate(376,6)">
  <path d="M0 3 L18 0 V30 L0 27 Z" fill="#2b579a"/>
  <rect x="18" y="4" width="12" height="21" fill="#fff"/><path d="M20 8H28M20 11H28M20 14H28M20 17H28M20 20H28M20 23H28" stroke="#2b579a" stroke-width="1"/>
  <text x="2" y="21" font-family="Liberation Sans" font-weight="bold" font-size="12" fill="#fff">W</text>
 </g>
 <!-- excel -->
 <g transform="translate(438,5)">
  <path d="M0 3 L18 0 V31 L0 28 Z" fill="#217346"/>
  <rect x="18" y="6" width="12" height="21" fill="#fff"/><path d="M20 9H28M20 12H28M20 15H28M20 18H28M20 21H28M20 24H28M24 8V26" stroke="#217346" stroke-width="1"/>
  <text x="3" y="21" font-family="Liberation Sans" font-weight="bold" font-size="13" fill="#fff">X</text>
 </g>
 <!-- editor red pad -->
 <g transform="translate(0,-1040)">
  <path d="M510 1045 L525 1048 L517 1064 L500 1063 Z" fill="#e86a6a"/>
  <path d="M510 1045 L525 1048 L524 1050 L509 1047 Z" fill="#f0f0f0"/>
  <path d="M525 1048 L527 1049 L527 1066 L516 1065 Z" fill="#c8dcf4"/>
  <path d="M509.5 1069.5 H518.5 M514 1065 V1074" stroke="#1e8a1e" stroke-width="3"/><path d="M510.5 1069.5 H517.5 M514 1066 V1073" stroke="#48c040" stroke-width="1.6"/>
  <path d="M519.5 1069.5 H528.5 M524 1065 V1074" stroke="#c8a810" stroke-width="3"/><path d="M520.5 1069.5 H527.5 M524 1066 V1073" stroke="#f4dc40" stroke-width="1.6"/>
 </g>
 <!-- gom -->
 <g transform="translate(0,-1040)">
  <rect x="561" y="1044.5" width="31.5" height="31" rx="5" fill="#ec3424"/>
  <circle cx="578.3" cy="1063" r="9.5" fill="#fff"/><circle cx="575" cy="1059.5" r="3.3" fill="#e83020"/>
  <circle cx="569" cy="1053.5" r="2.8" fill="#fff"/><circle cx="574" cy="1050" r="2.3" fill="#fff"/><circle cx="579" cy="1050" r="2.2" fill="#fff"/><circle cx="583.5" cy="1052" r="1.8" fill="#fff"/><circle cx="586.5" cy="1054.5" r="1.4" fill="#fff"/>
 </g>
 <!-- putty keygen-ish -->
 <g transform="translate(623,4)">
  <rect x="1" y="1" width="27" height="22" fill="#e8eef8" stroke="#6a7a90"/>
  <rect x="2" y="1" width="25" height="4" fill="#7aa8e0"/>
  <rect x="11" y="13" width="20" height="18" fill="#222" stroke="#666"/>
  <path d="M14 17H27M14 21H22M14 25H24" stroke="#e0d020" stroke-width="1.5"/>
  <circle cx="8" cy="24" r="7" fill="#c8c8c8" stroke="#777"/>
 </g>
 <!-- filezilla -->
 <g transform="translate(685,4)">
  <rect x="0" y="0" width="32" height="32" fill="#bf0000"/>
  <text x="3" y="26" font-family="Liberation Sans" font-weight="bold" font-style="italic" font-size="24" fill="#fff">Fz</text>
 </g>
 <!-- xming -->
 <g transform="translate(746,4)">
  <ellipse cx="17" cy="17.5" rx="14.5" ry="10" fill="none" stroke="#f0c870" stroke-width="1.3"/>
  <path d="M4.5 23 A14.5 10 0 0 1 9 9.5" fill="none" stroke="#e05a20" stroke-width="2.2"/>
  <path d="M7 1 L24 32" stroke="#fff" stroke-width="6"/><path d="M27 1 L6 32" stroke="#fff" stroke-width="3.2"/>
  <path d="M7 1 L24 32" stroke="#000" stroke-width="4.5"/><path d="M27 1 L6 32" stroke="#000" stroke-width="1.6"/>
 </g>
 <!-- vmware -->
 <g transform="translate(806,5)" fill="none" stroke-width="4">
  <rect x="4" y="8" width="21.5" height="21.5" rx="5" stroke="#f4a414"/>
  <rect x="9" y="2" width="21.5" height="21.5" rx="5" stroke="#2a9ee8"/>
  <path d="M4 13 V24.5 A5 5 0 0 0 9 29.5 H20.5 A5 5 0 0 0 25.5 24.5 V20" stroke="#f4a414"/>
 </g>
 <!-- utorrent -->
 <g transform="translate(872,5)">
  <circle cx="15.5" cy="16" r="15" fill="#6cb83c"/>
  <path d="M8 9 L11 26 M11 19 Q12 22 17 22 Q21 22 22 17 L23 9" fill="none" stroke="#fff" stroke-width="4"/>
 </g>
 <!-- cmd -->
 <g transform="translate(933,9)">
  <rect x="0" y="0" width="29" height="23" fill="#000" stroke="#777"/>
  <rect x="0" y="0" width="29" height="2" fill="#c8c8c8"/>
  <text x="2" y="12" font-family="Liberation Mono" font-size="8" fill="#fff">C:\_</text>
 </g>
</svg>
</body></html>
